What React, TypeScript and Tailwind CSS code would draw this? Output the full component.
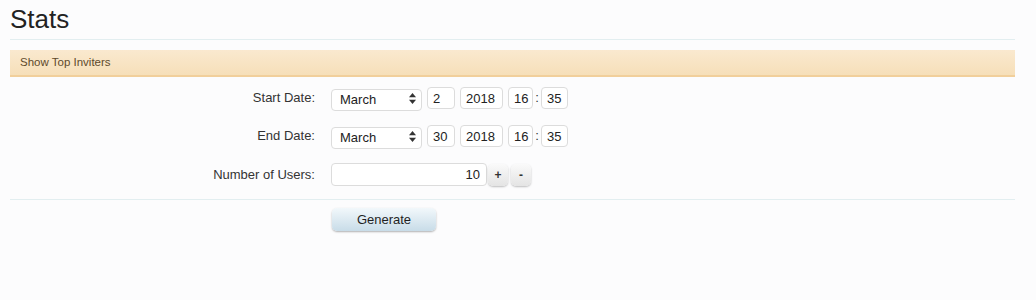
const font = { fontFamily: '"Liberation Sans", Arial, sans-serif' };

function Field({ value, className }: { value: string; className: string }) {
  return (
    <input
      readOnly
      value={value}
      className={`h-[22px] rounded-[4px] border border-[#dcdcdc] bg-white pl-[5px] pr-0 text-[13px] text-[#222] outline-none ${className}`}
    />
  );
}

function MonthSelect() {
  return (
    <div className="relative h-[22px] w-[91px]">
      <select
        defaultValue="March"
        className="h-full w-full appearance-none rounded-[4px] border border-[#dcdcdc] bg-white pl-[8px] text-[13px] text-[#222] outline-none"
      >
        <option>March</option>
      </select>
      <svg className="pointer-events-none absolute right-[6px] top-[6px]" width="7" height="11" viewBox="0 0 7 11">
        <path d="M3.5 0 L7 4.2 L0 4.2 Z" fill="#333" />
        <path d="M3.5 11 L7 6.8 L0 6.8 Z" fill="#333" />
      </svg>
    </div>
  );
}

function DateRow({ label, day }: { label: string; day: string }) {
  return (
    <div className="flex items-center">
      <div className="w-[305px] text-right text-[13px] text-[#333]">{label}</div>
      <div className="ml-[16px] flex items-center">
        <MonthSelect />
        <Field value={day} className="ml-[5px] w-[28px]" />
        <Field value="2018" className="ml-[5px] w-[43px]" />
        <Field value="16" className="ml-[5px] w-[25px] pl-[4px]" />
        <span className="mx-[2px] w-[4px] text-center text-[13px] text-[#333]">:</span>
        <Field value="35" className="w-[27px] pl-[3px]" />
      </div>
    </div>
  );
}

function SpinButton({ label }: { label: string }) {
  return (
    <button className="h-[22px] w-[20px] rounded-[5px] bg-gradient-to-b from-[#fafafa] to-[#e4e4e4] text-[12px] font-bold text-[#333] shadow-[0_1px_2px_rgba(0,0,0,0.25)]">
      {label}
    </button>
  );
}

export default function App() {
  return (
    <div className="h-[300px] w-[1036px] bg-[#fcfcfd]" style={font}>
      <div className="pl-[10px] pr-[21px]">
        <h1 className="pt-[1px] text-[26px] leading-[36px] text-[#222]">Stats</h1>
        <div className="mt-[2px] border-t border-[#e2eef0]" />
        <div className="mt-[10px] flex h-[27px] items-center border-b-2 border-[#f1cf9b] bg-gradient-to-b from-[#fae9cf] to-[#f6dfb9] pl-[10px] text-[11.5px] text-[#5e4a2c]">
          Show Top Inviters
        </div>
        <div className="pt-[10px]">
          <DateRow label="Start Date:" day="2" />
          <div className="mt-[16px]">
            <DateRow label="End Date:" day="30" />
          </div>
          <div className="mt-[16px] flex items-center">
            <div className="w-[305px] text-right text-[13px] text-[#333]">Number of Users:</div>
            <div className="ml-[16px] flex items-center">
              <input
                readOnly
                value="10"
                className="h-[23px] w-[156px] rounded-[4px] border border-[#dcdcdc] bg-white px-[6px] text-right text-[13px] text-[#222] outline-none"
              />
              <div className="ml-[1px] flex gap-[3px]">
                <SpinButton label="+" />
                <SpinButton label="-" />
              </div>
            </div>
          </div>
        </div>
        <div className="mt-[13px] border-t border-[#e2eef0]" />
        <div className="pl-[322px] pt-[7px]">
          <button className="h-[23px] w-[104px] rounded-[5px] bg-gradient-to-b from-[#f2f8fb] to-[#c8dce8] text-[13px] text-[#1f1f1f] shadow-[0_1px_2px_rgba(0,0,0,0.3)]">
            Generate
          </button>
        </div>
      </div>
    </div>
  );
}
